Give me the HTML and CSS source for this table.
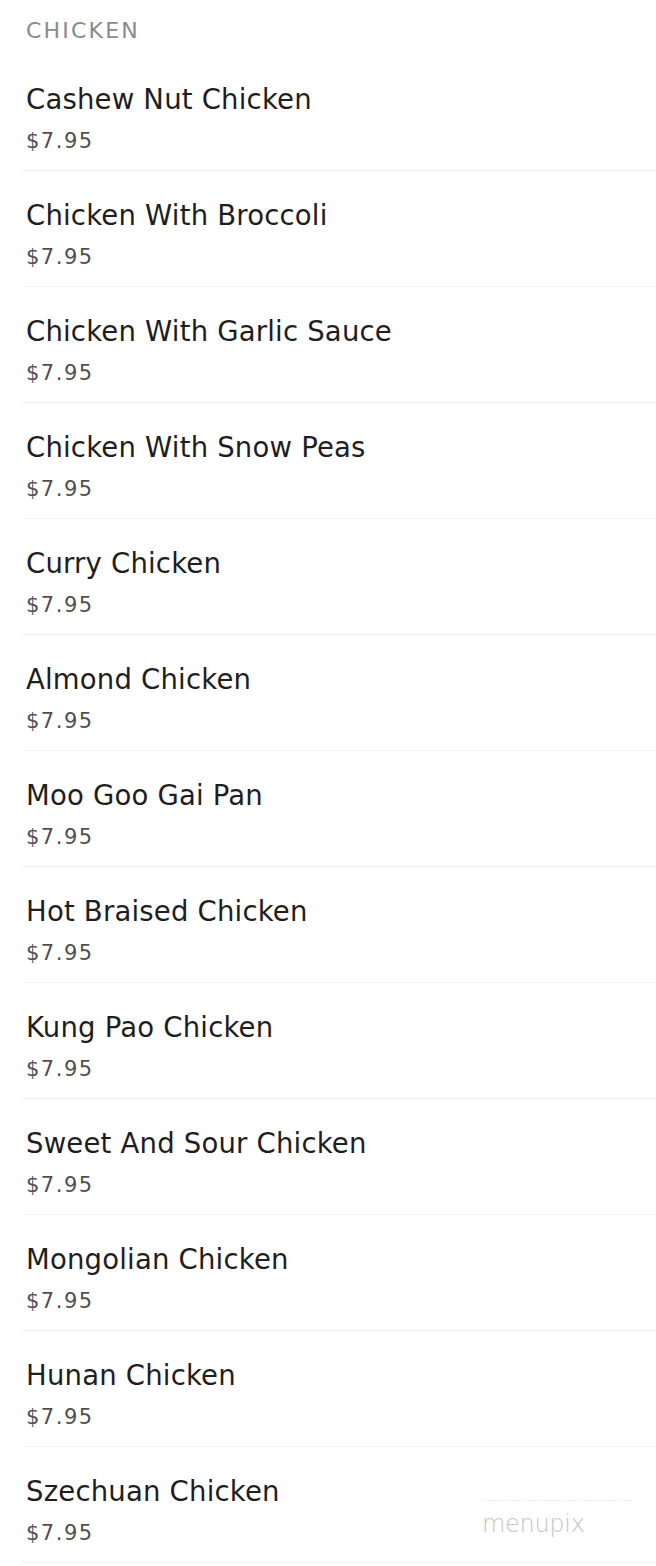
FILE: index.html
```html
<!DOCTYPE html>
<html>
<head>
<meta charset="utf-8">
<link rel="stylesheet" href="styles.css">
</head>
<body>
<div class="page">
  <h2 class="section">CHICKEN</h2>
  <ul class="menu">
    <li class="item"><div class="name">Cashew Nut Chicken</div><div class="price">$7.95</div></li>
    <li class="item"><div class="name">Chicken With Broccoli</div><div class="price">$7.95</div></li>
    <li class="item"><div class="name">Chicken With Garlic Sauce</div><div class="price">$7.95</div></li>
    <li class="item"><div class="name">Chicken With Snow Peas</div><div class="price">$7.95</div></li>
    <li class="item"><div class="name">Curry Chicken</div><div class="price">$7.95</div></li>
    <li class="item"><div class="name">Almond Chicken</div><div class="price">$7.95</div></li>
    <li class="item"><div class="name">Moo Goo Gai Pan</div><div class="price">$7.95</div></li>
    <li class="item"><div class="name">Hot Braised Chicken</div><div class="price">$7.95</div></li>
    <li class="item"><div class="name">Kung Pao Chicken</div><div class="price">$7.95</div></li>
    <li class="item"><div class="name">Sweet And Sour Chicken</div><div class="price">$7.95</div></li>
    <li class="item"><div class="name">Mongolian Chicken</div><div class="price">$7.95</div></li>
    <li class="item"><div class="name">Hunan Chicken</div><div class="price">$7.95</div></li>
    <li class="item"><div class="name">Szechuan Chicken</div><div class="price">$7.95</div></li>
  </ul>
  <div class="watermark">menupix</div>
</div>
</body>
</html>
```

FILE: styles.css
```css
html, body {
  margin: 0;
  padding: 0;
  background: #ffffff;
}
.page {
  position: relative;
  width: 656px;
  height: 1566px;
  overflow: hidden;
  font-family: "DejaVu Sans", "Open Sans", sans-serif;
}
.section {
  margin: 0;
  padding: 16px 0 9px 26px;
  line-height: 30px;
  font-size: 22px;
  font-weight: 400;
  letter-spacing: 2.2px;
  color: #8a8a8a;
}
.menu {
  list-style: none;
  margin: 0 0 0 22px;
  padding: 0;
}
.item {
  padding: 26px 0 11px 4px;
  border-bottom: 1px solid #f1f1f1;
}
.name {
  font-size: 27.5px;
  line-height: 36px;
  letter-spacing: 0.2px;
  color: #1e1e1e;
}
.price {
  margin-top: 6px;
  font-size: 21px;
  line-height: 36px;
  letter-spacing: 1.5px;
  color: #505050;
}
.watermark {
  position: absolute;
  left: 482px;
  top: 1500px;
  width: 150px;
  border-top: 1px dashed #ececec;
  padding-top: 8px;
  font-family: "DejaVu Sans", sans-serif;
  font-weight: 300;
  font-size: 24px;
  line-height: 30px;
  color: #c4c4c4;
  letter-spacing: -0.3px;
}
```
